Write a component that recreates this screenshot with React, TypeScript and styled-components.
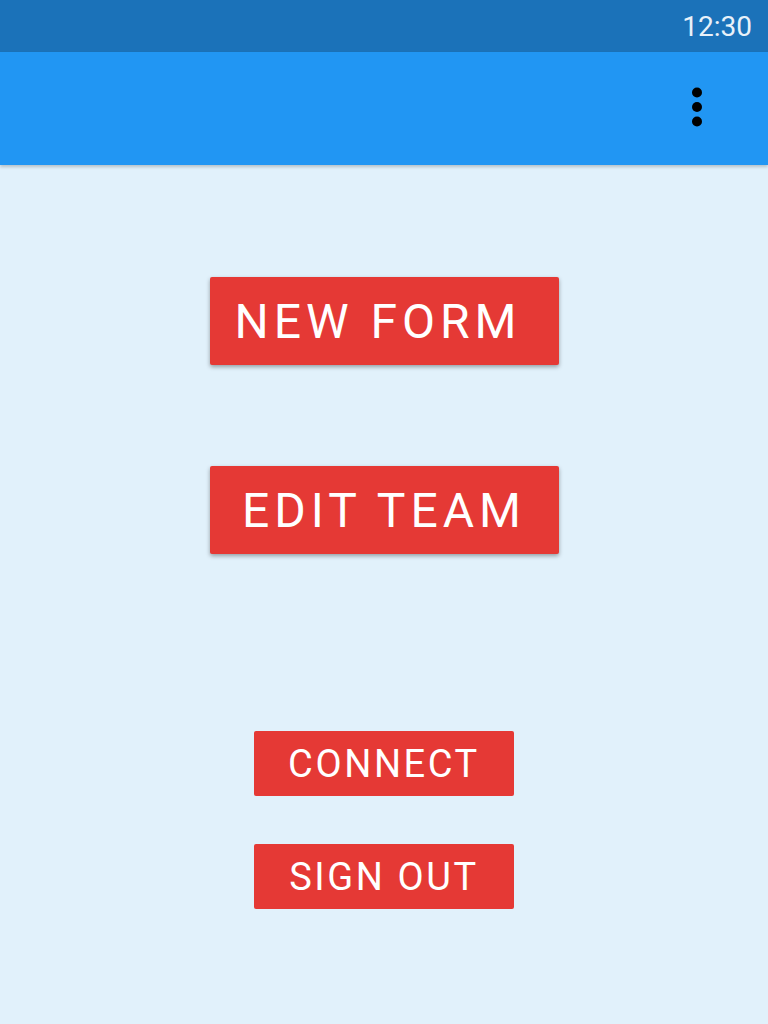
import React from "react";
import styled, { createGlobalStyle } from "styled-components";

const Global = createGlobalStyle`
  html, body { margin: 0; padding: 0; }
  body { background: #e1f1fb; font-family: Roboto, "Noto Sans", sans-serif; }
`;

const Screen = styled.div`
  width: 768px;
  height: 1024px;
  background: #e1f1fb;
  display: flex;
  flex-direction: column;
  overflow: hidden;
`;

const StatusBar = styled.div`
  height: 52px;
  background: #1b72b9;
  display: flex;
  align-items: center;
  justify-content: flex-end;
  padding-right: 16px;
  color: #e8f1f9;
  font-size: 28px;
  font-family: Roboto, sans-serif;
`;

const AppBar = styled.div`
  height: 113px;
  box-sizing: border-box;
  background: #2196f3;
  display: flex;
  align-items: center;
  justify-content: flex-end;
  padding-right: 65px;
  padding-bottom: 4px;
  box-shadow: 0 2px 3px rgba(0, 0, 0, 0.2);
  position: relative;
  z-index: 1;
`;

const Content = styled.div`
  flex: 1;
  display: flex;
  flex-direction: column;
  align-items: center;
  padding-top: 112px;
`;

const BigButton = styled.button<{ $mt?: number; $padRight?: number }>`
  width: 349px;
  height: 88px;
  margin-top: ${(p) => p.$mt ?? 0}px;
  background: #e53935;
  color: #ffffff;
  border: none;
  border-radius: 2px;
  box-shadow: 0 2px 4px rgba(0, 0, 0, 0.35);
  font-family: Roboto, sans-serif;
  font-size: 48px;
  letter-spacing: 5px;
  display: flex;
  align-items: center;
  justify-content: center;
  padding: 0 ${(p) => p.$padRight ?? 0}px 0 0;
`;

const SmallButton = styled.button<{ $mt?: number }>`
  width: 260px;
  height: 65px;
  margin-top: ${(p) => p.$mt ?? 0}px;
  background: #e53935;
  color: #ffffff;
  border: none;
  border-radius: 2px;
  font-family: Roboto, sans-serif;
  font-size: 38px;
  letter-spacing: 2.6px;
  display: flex;
  align-items: center;
  justify-content: center;
  padding: 0;
`;

const MenuIcon = () => (
  <svg width="12" height="44" viewBox="0 0 12 44">
    <circle cx="6" cy="7.5" r="5" fill="#000" />
    <circle cx="6" cy="22" r="5" fill="#000" />
    <circle cx="6" cy="36.5" r="5" fill="#000" />
  </svg>
);

export default function App() {
  return (
    <Screen>
      <Global />
      <StatusBar>12:30</StatusBar>
      <AppBar>
        <MenuIcon />
      </AppBar>
      <Content>
        <BigButton $padRight={12}>NEW FORM</BigButton>
        <BigButton $mt={101}>EDIT TEAM</BigButton>
        <SmallButton $mt={177}>CONNECT</SmallButton>
        <SmallButton $mt={48}>SIGN OUT</SmallButton>
      </Content>
    </Screen>
  );
}
